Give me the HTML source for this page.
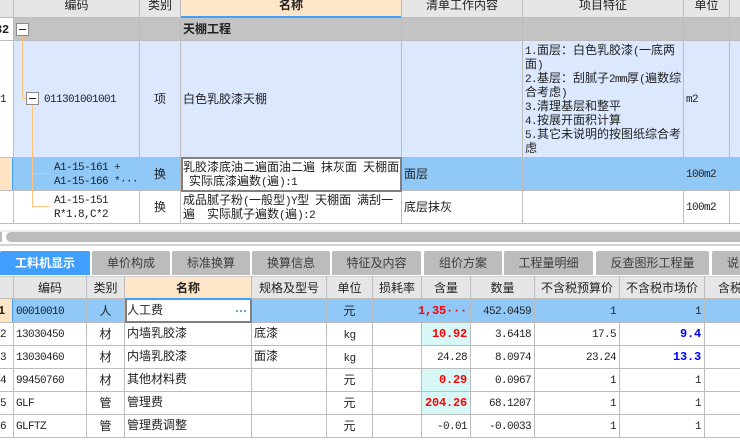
<!DOCTYPE html>
<html><head><meta charset="utf-8">
<style>
html,body{margin:0;padding:0;width:740px;height:448px;overflow:hidden;background:#fff}
#p{position:relative;width:740px;height:448px;overflow:hidden;font:12px/14px "WenQuanYi Zen Hei","Noto Sans CJK SC",sans-serif;color:#222}
#p div{position:absolute}
.t{white-space:nowrap}
.c{text-align:center}
.r{text-align:right}
.b{font-weight:bold}
i{font:normal 11px/0 "Liberation Mono",monospace;letter-spacing:-.6px}
i.k{font:bold 12px/0 "Liberation Mono",monospace;letter-spacing:-.2px}
.rd{color:#f00}
.bl{color:#00f}
.v{width:1px;background:#bcbcbc}
.h{height:1px;background:#bcbcbc}
.o{background:#ffc27a}
.box{width:11px;height:11px;border:1px solid #8a8a8a;background:#fff}
.box:after{content:"";position:absolute;left:2px;top:5px;width:7px;height:1px;background:#222}
.tab{top:251px;height:24px;background:#bcbcbc;border-radius:2px 2px 0 0;color:#3c3c3c;line-height:24px;text-align:center;white-space:nowrap;overflow:hidden}
.d{width:2px;height:2px;top:310px;background:#6aa6dc}
</style></head><body><div id="p">

<!-- TOP HEADER -->
<div style="left:0;top:0;width:740px;height:17px;background:#e6e6e6"></div>
<div style="left:181px;top:0;width:220px;height:16px;background:#ffe6c8"></div>
<div style="left:180px;top:16px;width:222px;height:2px;background:#409eff"></div>
<div class="h" style="left:0;top:17px;width:180px"></div>
<div class="h" style="left:402px;top:17px;width:338px"></div>

<!-- Row fills -->
<div style="left:14px;top:18px;width:726px;height:22px;background:#c3c3c3"></div>
<div style="left:14px;top:41px;width:726px;height:116px;background:#dbe8fe"></div>
<div style="left:0;top:158px;width:12px;height:32px;background:#ffe4c4"></div>
<div style="left:12px;top:158px;width:728px;height:32px;background:#90c8f8"></div>
<div style="left:12px;top:158px;width:2px;height:32px;background:#409eff"></div>

<!-- Grid lines -->
<div class="h" style="left:0;top:40px;width:740px"></div>
<div class="h" style="left:0;top:157px;width:740px"></div>
<div class="h" style="left:0;top:190px;width:740px"></div>
<div class="h" style="left:0;top:223px;width:740px"></div>
<div class="v" style="left:13px;top:0;height:224px"></div>
<div class="v" style="left:139px;top:0;height:224px"></div>
<div class="v" style="left:180px;top:0;height:224px"></div>
<div class="v" style="left:401px;top:0;height:224px"></div>
<div class="v" style="left:522px;top:0;height:224px"></div>
<div class="v" style="left:683px;top:0;height:224px"></div>
<div class="v" style="left:729px;top:0;height:224px"></div>

<!-- Top header text -->
<div class="t c" style="left:14px;width:125px;top:-2px">编码</div>
<div class="t c" style="left:140px;width:40px;top:-2px">类别</div>
<div class="t c b" style="left:181px;width:220px;top:-2px">名称</div>
<div class="t c" style="left:402px;width:120px;top:-2px">清单工作内容</div>
<div class="t c" style="left:523px;width:160px;top:-2px">项目特征</div>
<div class="t c" style="left:684px;width:45px;top:-2px">单位</div>

<!-- Tree lines -->
<div class="o" style="left:22px;top:35px;width:1px;height:64px"></div>
<div class="o" style="left:22px;top:98px;width:5px;height:1px"></div>
<div class="o" style="left:32px;top:105px;width:1px;height:102px"></div>
<div class="o" style="left:32px;top:173px;width:17px;height:1px"></div>
<div class="o" style="left:32px;top:206px;width:17px;height:1px"></div>
<div class="box" style="left:16px;top:23px"></div>
<div class="box" style="left:26px;top:92px"></div>

<!-- Row 1 -->
<div class="t r" style="left:-11px;width:20px;top:22px"><i class="k">32</i></div>
<div class="t b" style="left:183px;top:22px">天棚工程</div>

<!-- Row 2 -->
<div class="t" style="left:0;top:91px"><i>1</i></div>
<div class="t" style="left:44px;top:91px"><i>011301001001</i></div>
<div class="t c" style="left:140px;width:40px;top:92px">项</div>
<div class="t" style="left:183px;top:92px">白色乳胶漆天棚</div>
<div class="t" style="left:525px;top:43px"><i>1.</i>面层：白色乳胶漆<i>(</i>一底两<br>面<i>)</i><br><i>2.</i>基层：刮腻子<i>2mm</i>厚<i>(</i>遍数综<br>合考虑<i>)</i><br><i>3.</i>清理基层和整平<br><i>4.</i>按展开面积计算<br><i>5.</i>其它未说明的按图纸综合考<br>虑</div>
<div class="t" style="left:686px;top:91px"><i>m2</i></div>

<!-- Row 3 -->
<div class="t" style="left:54px;top:159px"><i>A1-15-161 +</i><br><i>A1-15-166 *···</i></div>
<div class="t c" style="left:140px;width:40px;top:167px">换</div>
<div style="left:181px;top:157px;width:217px;height:31px;background:#fff;border:2px solid #808080"></div>
<div class="t" style="left:183px;top:160px">乳胶漆底油二遍面油二遍<i>&nbsp;</i>抹灰面<i>&nbsp;</i>天棚面<br><i>&nbsp;</i>实际底漆遍数<i>(</i>遍<i>):1</i></div>
<div class="t" style="left:404px;top:167px">面层</div>
<div class="t" style="left:686px;top:166px"><i>100m2</i></div>

<!-- Row 4 -->
<div class="t" style="left:54px;top:192px"><i>A1-15-151</i><br><i>R*1.8,C*2</i></div>
<div class="t c" style="left:140px;width:40px;top:200px">换</div>
<div class="t" style="left:183px;top:193px">成品腻子粉<i>(</i>一般型<i>)Y</i>型<i>&nbsp;</i>天棚面<i>&nbsp;</i>满刮一<br>遍<i>&nbsp;&nbsp;</i>实际腻子遍数<i>(</i>遍<i>):2</i></div>
<div class="t" style="left:404px;top:200px">底层抹灰</div>
<div class="t" style="left:686px;top:199px"><i>100m2</i></div>

<!-- Scrollbar -->
<div style="left:0;top:230px;width:740px;height:2px;background:#ececec"></div>
<div style="left:0;top:232px;width:2px;height:10px;background:#bcbcbc"></div>
<div style="left:6px;top:232px;width:760px;height:10px;background:#bcbcbc;border-radius:5px"></div>
<div style="left:0;top:244px;width:740px;height:2px;background:#d4d4d4"></div>

<!-- Tabs -->
<div class="tab b" style="left:0;width:90px;background:#409eff;color:#fff">工料机显示</div>
<div class="tab" style="left:92px;width:78px">单价构成</div>
<div class="tab" style="left:172px;width:78px">标准换算</div>
<div class="tab" style="left:252px;width:78px">换算信息</div>
<div class="tab" style="left:332px;width:89px">特征及内容</div>
<div class="tab" style="left:424px;width:78px">组价方案</div>
<div class="tab" style="left:504px;width:89px">工程量明细</div>
<div class="tab" style="left:596px;width:113px">反查图形工程量</div>
<div class="tab" style="left:712px;width:40px;padding-left:3px;text-align:left"><span style="margin-left:12px">说明</span></div>

<!-- Bottom header -->
<div style="left:0;top:276px;width:740px;height:22px;background:#e6e6e6"></div>
<div style="left:125px;top:277px;width:126px;height:21px;background:#ffe6c8"></div>
<div style="left:124px;top:298px;width:128px;height:2px;background:#409eff"></div>
<div class="h" style="left:0;top:276px;width:740px;background:#d0d0d0"></div>
<div class="h" style="left:0;top:298px;width:124px"></div>
<div class="h" style="left:252px;top:298px;width:488px"></div>

<!-- Bottom fills -->
<div style="left:0;top:299px;width:12px;height:23px;background:#ffe4c4"></div>
<div style="left:12px;top:299px;width:728px;height:23px;background:#90c8f8"></div>
<div style="left:12px;top:299px;width:2px;height:23px;background:#409eff"></div>
<div style="left:422px;top:323px;width:48px;height:22px;background:#d8f8f8"></div>
<div style="left:422px;top:369px;width:48px;height:22px;background:#d8f8f8"></div>
<div style="left:422px;top:392px;width:48px;height:22px;background:#d8f8f8"></div>

<!-- Bottom grid -->
<div class="h" style="left:0;top:322px;width:740px"></div>
<div class="h" style="left:0;top:345px;width:740px"></div>
<div class="h" style="left:0;top:368px;width:740px"></div>
<div class="h" style="left:0;top:391px;width:740px"></div>
<div class="h" style="left:0;top:414px;width:740px"></div>
<div class="h" style="left:0;top:437px;width:740px"></div>
<div class="v" style="left:13px;top:276px;height:162px"></div>
<div class="v" style="left:86px;top:276px;height:162px"></div>
<div class="v" style="left:124px;top:276px;height:162px"></div>
<div class="v" style="left:251px;top:276px;height:162px"></div>
<div class="v" style="left:326px;top:276px;height:162px"></div>
<div class="v" style="left:372px;top:276px;height:162px"></div>
<div class="v" style="left:421px;top:276px;height:162px"></div>
<div class="v" style="left:470px;top:276px;height:162px"></div>
<div class="v" style="left:534px;top:276px;height:162px"></div>
<div class="v" style="left:619px;top:276px;height:162px"></div>
<div class="v" style="left:704px;top:276px;height:162px"></div>

<!-- Bottom header text -->
<div class="t c" style="left:14px;width:72px;top:281px">编码</div>
<div class="t c" style="left:87px;width:37px;top:281px">类别</div>
<div class="t c b" style="left:125px;width:126px;top:281px">名称</div>
<div class="t c" style="left:252px;width:74px;top:281px">规格及型号</div>
<div class="t c" style="left:327px;width:45px;top:281px">单位</div>
<div class="t c" style="left:373px;width:48px;top:281px">损耗率</div>
<div class="t c" style="left:422px;width:48px;top:281px">含量</div>
<div class="t c" style="left:471px;width:63px;top:281px">数量</div>
<div class="t c" style="left:535px;width:84px;top:281px">不含税预算价</div>
<div class="t c" style="left:620px;width:84px;top:281px">不含税市场价</div>
<div class="t" style="left:718px;top:281px">含税</div>

<!-- Edit cell row 1 -->
<div style="left:125px;top:299px;width:123px;height:21px;background:#fff;border:2px solid #808080;border-top:1px solid #409eff"></div>
<div class="d" style="left:236px"></div>
<div class="d" style="left:240px"></div>
<div class="d" style="left:244px"></div>

<!-- Rows -->
<div class="t" style="left:-2px;top:303px"><i class="k">1</i></div>
<div class="t" style="left:0;top:326px"><i>2</i></div>
<div class="t" style="left:0;top:349px"><i>3</i></div>
<div class="t" style="left:0;top:372px"><i>4</i></div>
<div class="t" style="left:0;top:395px"><i>5</i></div>
<div class="t" style="left:0;top:418px"><i>6</i></div>

<div class="t" style="left:16px;top:303px"><i>00010010</i></div>
<div class="t" style="left:16px;top:326px"><i>13030450</i></div>
<div class="t" style="left:16px;top:349px"><i>13030460</i></div>
<div class="t" style="left:16px;top:372px"><i>99450760</i></div>
<div class="t" style="left:16px;top:395px"><i>GLF</i></div>
<div class="t" style="left:16px;top:418px"><i>GLFTZ</i></div>

<div class="t c" style="left:87px;width:37px;top:304px">人</div>
<div class="t c" style="left:87px;width:37px;top:327px">材</div>
<div class="t c" style="left:87px;width:37px;top:350px">材</div>
<div class="t c" style="left:87px;width:37px;top:373px">材</div>
<div class="t c" style="left:87px;width:37px;top:396px">管</div>
<div class="t c" style="left:87px;width:37px;top:419px">管</div>

<div class="t" style="left:127px;top:303px">人工费</div>
<div class="t" style="left:127px;top:326px">内墙乳胶漆</div>
<div class="t" style="left:127px;top:349px">内墙乳胶漆</div>
<div class="t" style="left:127px;top:372px">其他材料费</div>
<div class="t" style="left:127px;top:395px">管理费</div>
<div class="t" style="left:127px;top:418px">管理费调整</div>

<div class="t" style="left:254px;top:326px">底漆</div>
<div class="t" style="left:254px;top:349px">面漆</div>

<div class="t c" style="left:327px;width:45px;top:304px">元</div>
<div class="t c" style="left:327px;width:45px;top:327px"><i>kg</i></div>
<div class="t c" style="left:327px;width:45px;top:350px"><i>kg</i></div>
<div class="t c" style="left:327px;width:45px;top:373px">元</div>
<div class="t c" style="left:327px;width:45px;top:396px">元</div>
<div class="t c" style="left:327px;width:45px;top:419px">元</div>

<div class="t r rd" style="left:400px;width:67px;top:303px"><i class="k">1,35···</i></div>
<div class="t r rd" style="left:400px;width:67px;top:326px"><i class="k">10.92</i></div>
<div class="t r" style="left:400px;width:67px;top:349px"><i>24.28</i></div>
<div class="t r rd" style="left:400px;width:67px;top:372px"><i class="k">0.29</i></div>
<div class="t r rd" style="left:400px;width:67px;top:395px"><i class="k">204.26</i></div>
<div class="t r" style="left:400px;width:67px;top:418px"><i>-0.01</i></div>

<div class="t r" style="left:460px;width:71px;top:303px"><i>452.0459</i></div>
<div class="t r" style="left:460px;width:71px;top:326px"><i>3.6418</i></div>
<div class="t r" style="left:460px;width:71px;top:349px"><i>8.0974</i></div>
<div class="t r" style="left:460px;width:71px;top:372px"><i>0.0967</i></div>
<div class="t r" style="left:460px;width:71px;top:395px"><i>68.1207</i></div>
<div class="t r" style="left:460px;width:71px;top:418px"><i>-0.0033</i></div>

<div class="t r" style="left:540px;width:76px;top:303px"><i>1</i></div>
<div class="t r" style="left:540px;width:76px;top:326px"><i>17.5</i></div>
<div class="t r" style="left:540px;width:76px;top:349px"><i>23.24</i></div>
<div class="t r" style="left:540px;width:76px;top:372px"><i>1</i></div>
<div class="t r" style="left:540px;width:76px;top:395px"><i>1</i></div>
<div class="t r" style="left:540px;width:76px;top:418px"><i>1</i></div>

<div class="t r" style="left:625px;width:76px;top:303px"><i>1</i></div>
<div class="t r bl" style="left:625px;width:76px;top:326px"><i class="k">9.4</i></div>
<div class="t r bl" style="left:625px;width:76px;top:349px"><i class="k">13.3</i></div>
<div class="t r" style="left:625px;width:76px;top:372px"><i>1</i></div>
<div class="t r" style="left:625px;width:76px;top:395px"><i>1</i></div>
<div class="t r" style="left:625px;width:76px;top:418px"><i>1</i></div>

</div></body></html>
